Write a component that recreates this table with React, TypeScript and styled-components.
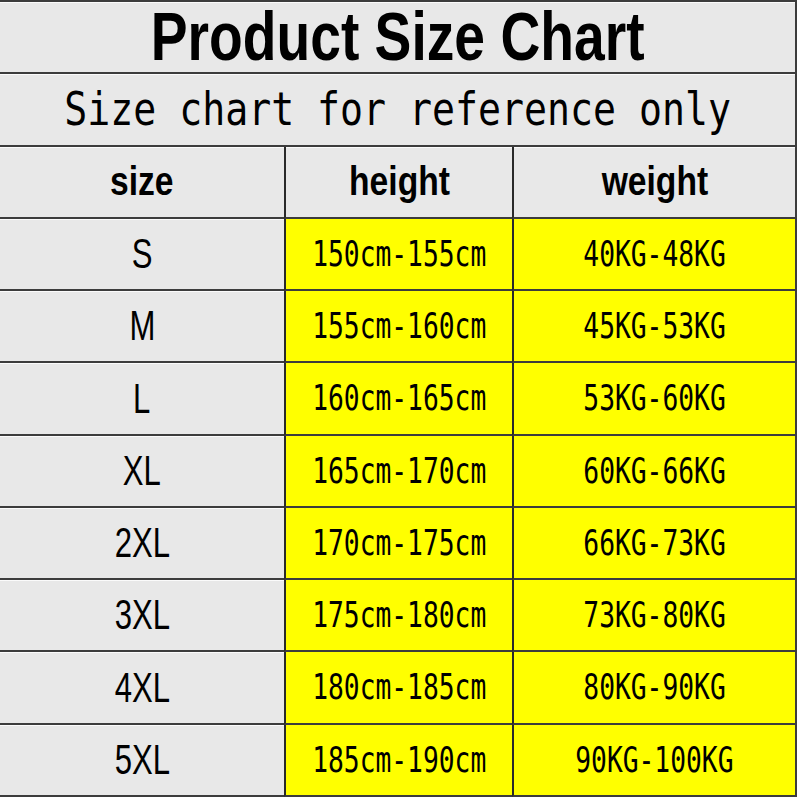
import styled, { createGlobalStyle } from 'styled-components';

const GlobalStyle = createGlobalStyle`
  html, body {
    margin: 0;
    padding: 0;
    background: #ffffff;
  }
`;

const rows = [
  { size: 'S', height: '150cm-155cm', weight: '40KG-48KG' },
  { size: 'M', height: '155cm-160cm', weight: '45KG-53KG' },
  { size: 'L', height: '160cm-165cm', weight: '53KG-60KG' },
  { size: 'XL', height: '165cm-170cm', weight: '60KG-66KG' },
  { size: '2XL', height: '170cm-175cm', weight: '66KG-73KG' },
  { size: '3XL', height: '175cm-180cm', weight: '73KG-80KG' },
  { size: '4XL', height: '180cm-185cm', weight: '80KG-90KG' },
  { size: '5XL', height: '185cm-190cm', weight: '90KG-100KG' },
];

/** whole chart */
const Chart = styled.div`
  width: 797px;
  height: 797px;
  box-sizing: border-box;
  border-top: 2px solid #3c3c3c;
  border-right: 2px solid #3c3c3c;
  display: grid;
  grid-template-columns: 284px 228px 283px;
  grid-template-rows: repeat(11, 1fr);
  background: #e8e8e8;
`;

const Cell = styled.div<{ $yellow?: boolean; $divider?: boolean; $span?: boolean }>`
  display: flex;
  align-items: center;
  justify-content: center;
  min-height: 0;
  box-sizing: border-box;
  border-bottom: 2px solid #3c3c3c;
  border-left: ${(p) => (p.$divider ? '2px solid #2a2a2a' : 'none')};
  background: ${(p) => (p.$yellow ? '#ffff00' : '#e8e8e8')};
  box-shadow: ${(p) => (p.$yellow ? 'none' : 'inset 0 1px 0 #fbfbfb')};
  grid-column: ${(p) => (p.$span ? '1 / -1' : 'auto')};
  color: #000;
`;

const Label = styled.span<{ $size: number; $squeeze: number; $bold?: boolean; $mono?: boolean }>`
  display: inline-block;
  white-space: nowrap;
  font-family: ${(p) =>
    p.$mono ? '"DejaVu Sans Mono", "Liberation Mono", monospace' : '"Liberation Sans", Arial, sans-serif'};
  font-size: ${(p) => p.$size}px;
  font-weight: ${(p) => (p.$bold ? 700 : 400)};
  line-height: 0.9;
  transform: scaleX(${(p) => p.$squeeze});
`;

export default function App() {
  return (
    <>
      <GlobalStyle />
      <Chart>
        <Cell $span>
          <Label $size={69} $squeeze={0.8} $bold>
            Product Size Chart
          </Label>
        </Cell>
        <Cell $span>
          <Label $size={46} $squeeze={0.83} $mono>
            Size chart for reference only
          </Label>
        </Cell>
        <Cell>
          <Label $size={41} $squeeze={0.82} $bold>
            size
          </Label>
        </Cell>
        <Cell $divider>
          <Label $size={41} $squeeze={0.82} $bold>
            height
          </Label>
        </Cell>
        <Cell $divider>
          <Label $size={41} $squeeze={0.82} $bold>
            weight
          </Label>
        </Cell>
        {rows.map((r) => (
          <>
            <Cell key={r.size + 's'}>
              <Label $size={42} $squeeze={0.74}>
                {r.size}
              </Label>
            </Cell>
            <Cell key={r.size + 'h'} $divider $yellow>
              <Label $size={36} $squeeze={0.73} $mono>
                {r.height}
              </Label>
            </Cell>
            <Cell key={r.size + 'w'} $divider $yellow>
              <Label $size={36} $squeeze={0.73} $mono>
                {r.weight}
              </Label>
            </Cell>
          </>
        ))}
      </Chart>
    </>
  );
}
